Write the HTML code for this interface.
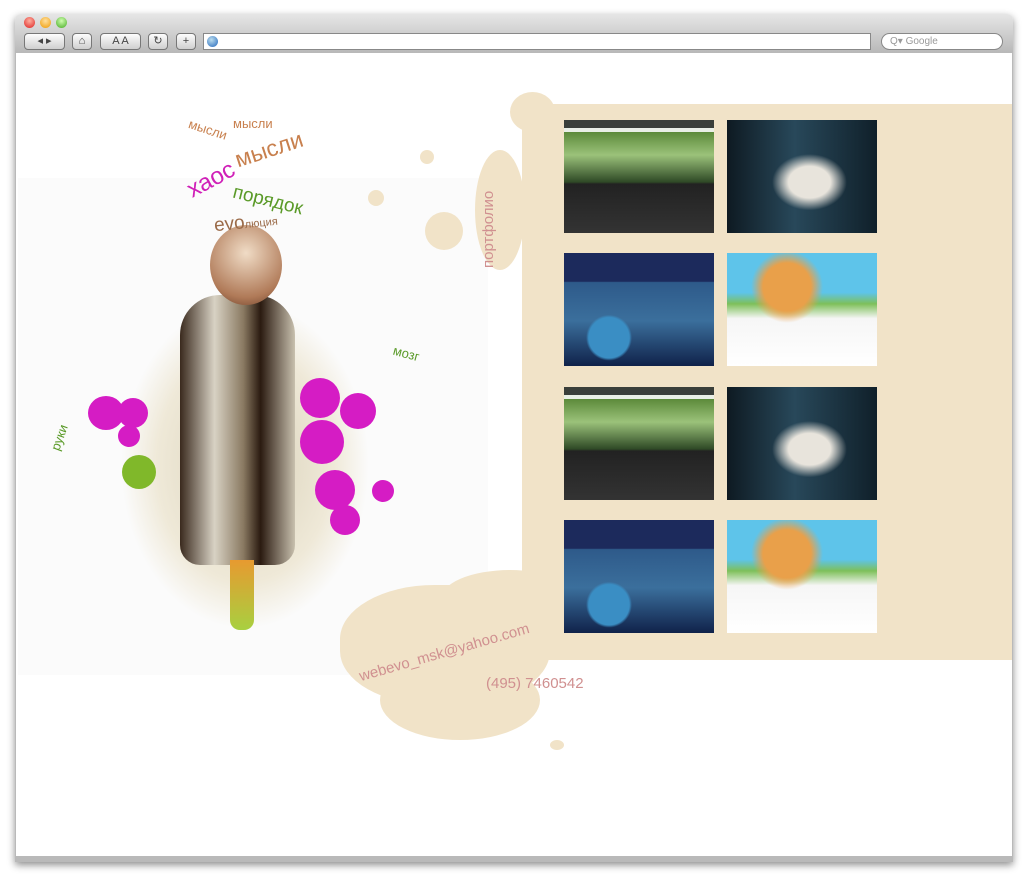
<!DOCTYPE html>
<html><head><meta charset="utf-8"><style>
*{margin:0;padding:0;box-sizing:border-box}
body{width:1029px;height:888px;background:#fff;position:relative;overflow:hidden;font-family:"Liberation Sans","DejaVu Sans",sans-serif}
.abs{position:absolute}
.win{left:15px;top:14px;width:998px;height:848px;border-radius:6px 6px 0 0;background:linear-gradient(#e6e6e6,#b9b9b9 38px);box-shadow:0 3px 8px rgba(0,0,0,.45)}
.content{left:16px;top:53px;width:996px;height:803px;background:#fff}
.btn{top:33px;height:17px;border:1px solid #777;border-radius:4px;background:linear-gradient(#fdfdfd,#cfcfcf);font-size:11px;color:#444;text-align:center;line-height:15px}
.dot{top:17px;width:11px;height:11px;border-radius:50%}
.t{position:absolute;width:150px;height:113px;overflow:hidden}
.green{background:linear-gradient(#3a3f3a 0 8px,#e9efe6 8px 12px,#5c8a3a 12px,#9bc27a 35px,#2f4a26 62px,#222 64px,#333 113px)}
.dark{background:radial-gradient(ellipse at 55% 55%,#e8e4dc 0 18%,transparent 32%),linear-gradient(90deg,#0e1a22,#28485a 45%,#10202a)}
.blue{background:radial-gradient(circle at 30% 75%,#3a8ec4 0 15%,transparent 17%),linear-gradient(#1c2a5c 0 25%,#2e5a8a 26%,#3b6f9c 60%,#10224a)}
.car{background:radial-gradient(circle at 40% 30%,#e9a04a 0 20%,transparent 30%),linear-gradient(#5ec4ea 0 35%,#7ec05a 45%,#f6f6f6 58%,#fff)}
.splat{position:absolute;border-radius:50%;background:#d51cc4}
.bg{position:absolute;background:#f1e3c8;border-radius:50%}
</style></head><body>
<div class="abs win"></div>
<div class="abs dot" style="left:24px;background:radial-gradient(circle at 50% 35%,#ffb0a0,#d22)"></div>
<div class="abs dot" style="left:40px;background:radial-gradient(circle at 50% 35%,#ffe0a0,#e90)"></div>
<div class="abs dot" style="left:56px;background:radial-gradient(circle at 50% 35%,#d0ffb0,#4a2)"></div>
<div class="abs btn" style="left:24px;width:41px">◂ ▸</div>
<div class="abs btn" style="left:72px;width:20px">⌂</div>
<div class="abs btn" style="left:100px;width:41px">A A</div>
<div class="abs btn" style="left:148px;width:20px">↻</div>
<div class="abs btn" style="left:176px;width:20px">+</div>
<div class="abs" style="left:203px;top:33px;width:668px;height:17px;background:#fff;border:1px solid #888"></div>
<div class="abs" style="left:207px;top:36px;width:11px;height:11px;border-radius:50%;background:radial-gradient(circle at 40% 35%,#bde,#26b)"></div>
<div class="abs" style="left:881px;top:33px;width:122px;height:17px;background:#fff;border:1px solid #888;border-radius:9px;font-size:10px;color:#999;line-height:15px;padding-left:8px">Q▾ Google</div>
<div class="abs content"></div>
<div class="abs" style="left:18px;top:178px;width:470px;height:497px;background:#fbfbfb"></div>

<!-- beige splash -->
<div class="abs" style="left:522px;top:104px;width:490px;height:556px;background:#f1e3c8"></div>
<div class="bg" style="left:340px;top:585px;width:210px;height:120px;border-radius:45%"></div>
<div class="bg" style="left:440px;top:570px;width:140px;height:60px"></div>
<div class="bg" style="left:380px;top:660px;width:160px;height:80px"></div>
<div class="bg" style="left:475px;top:150px;width:50px;height:120px"></div>
<div class="bg" style="left:510px;top:92px;width:45px;height:40px"></div>
<div class="bg" style="left:425px;top:212px;width:38px;height:38px"></div>
<div class="bg" style="left:368px;top:190px;width:16px;height:16px"></div>
<div class="bg" style="left:420px;top:150px;width:14px;height:14px"></div>
<div class="bg" style="left:550px;top:740px;width:14px;height:10px"></div>

<div class="abs" style="left:480px;top:184px;width:22px;height:84px;writing-mode:vertical-rl;transform:rotate(180deg);color:#d09090;font-size:15px">портфолио</div>
<div class="abs" style="left:362px;top:668px;color:#d09090;font-size:15px;transform:rotate(-16deg);transform-origin:left bottom;white-space:nowrap">webevo_msk@yahoo.com</div>
<div class="abs" style="left:486px;top:675px;color:#d09090;font-size:15px">(495) 7460542</div>

<!-- thumbs -->
<div class="t green" style="left:564px;top:120px"></div>
<div class="t dark" style="left:727px;top:120px"></div>
<div class="t blue" style="left:564px;top:253px"></div>
<div class="t car" style="left:727px;top:253px"></div>
<div class="t green" style="left:564px;top:387px"></div>
<div class="t dark" style="left:727px;top:387px"></div>
<div class="t blue" style="left:564px;top:520px"></div>
<div class="t car" style="left:727px;top:520px"></div>

<!-- left artwork -->
<div class="abs" style="left:120px;top:300px;width:250px;height:330px;border-radius:50%;background:radial-gradient(ellipse,#d8d0b8 0,#efe9d8 50%,transparent 70%)"></div>
<div class="abs" style="left:180px;top:295px;width:115px;height:270px;border-radius:40px 40px 20px 20px;background:linear-gradient(90deg,#3a2a1e,#d8d2c4 30%,#8a7a62 55%,#2a1a10 70%,#c8c0ae)"></div>
<div class="abs" style="left:210px;top:225px;width:72px;height:80px;border-radius:50%;background:radial-gradient(circle at 50% 35%,#f0dcc6,#b07a58 70%,#6a3e28)"></div>
<div class="abs" style="left:230px;top:560px;width:24px;height:70px;background:linear-gradient(#e79a30,#a8d040);border-radius:0 0 10px 10px"></div>
<div class="splat" style="left:88px;top:396px;width:36px;height:34px"></div>
<div class="splat" style="left:118px;top:398px;width:30px;height:30px"></div>
<div class="splat" style="left:118px;top:425px;width:22px;height:22px"></div>
<div class="splat" style="left:122px;top:455px;width:34px;height:34px;background:#80b82a"></div>
<div class="splat" style="left:300px;top:378px;width:40px;height:40px"></div>
<div class="splat" style="left:340px;top:393px;width:36px;height:36px"></div>
<div class="splat" style="left:300px;top:420px;width:44px;height:44px"></div>
<div class="splat" style="left:315px;top:470px;width:40px;height:40px"></div>
<div class="splat" style="left:330px;top:505px;width:30px;height:30px"></div>
<div class="splat" style="left:372px;top:480px;width:22px;height:22px"></div>

<div class="abs" style="left:188px;top:122px;color:#c8804e;font-size:13px;transform:rotate(18deg)">мысли</div>
<div class="abs" style="left:233px;top:116px;color:#c8804e;font-size:13px">мысли</div>
<div class="abs" style="left:234px;top:136px;color:#c8804e;font-size:23px;transform:rotate(-18deg)">мысли</div>
<div class="abs" style="left:186px;top:166px;color:#d020b8;font-size:24px;transform:rotate(-28deg)">хаос</div>
<div class="abs" style="left:232px;top:190px;color:#5a9a28;font-size:19px;transform:rotate(14deg)">порядок</div>
<div class="abs" style="left:214px;top:212px;color:#9a6a48;font-size:19px;transform:rotate(-6deg)">evo<span style="font-size:11px">люция</span></div>
<div class="abs" style="left:393px;top:346px;color:#5a9a28;font-size:13px;transform:rotate(15deg)">мозг</div>
<div class="abs" style="left:46px;top:430px;color:#5a9a28;font-size:13px;transform:rotate(-70deg)">руки</div>
</body></html>
